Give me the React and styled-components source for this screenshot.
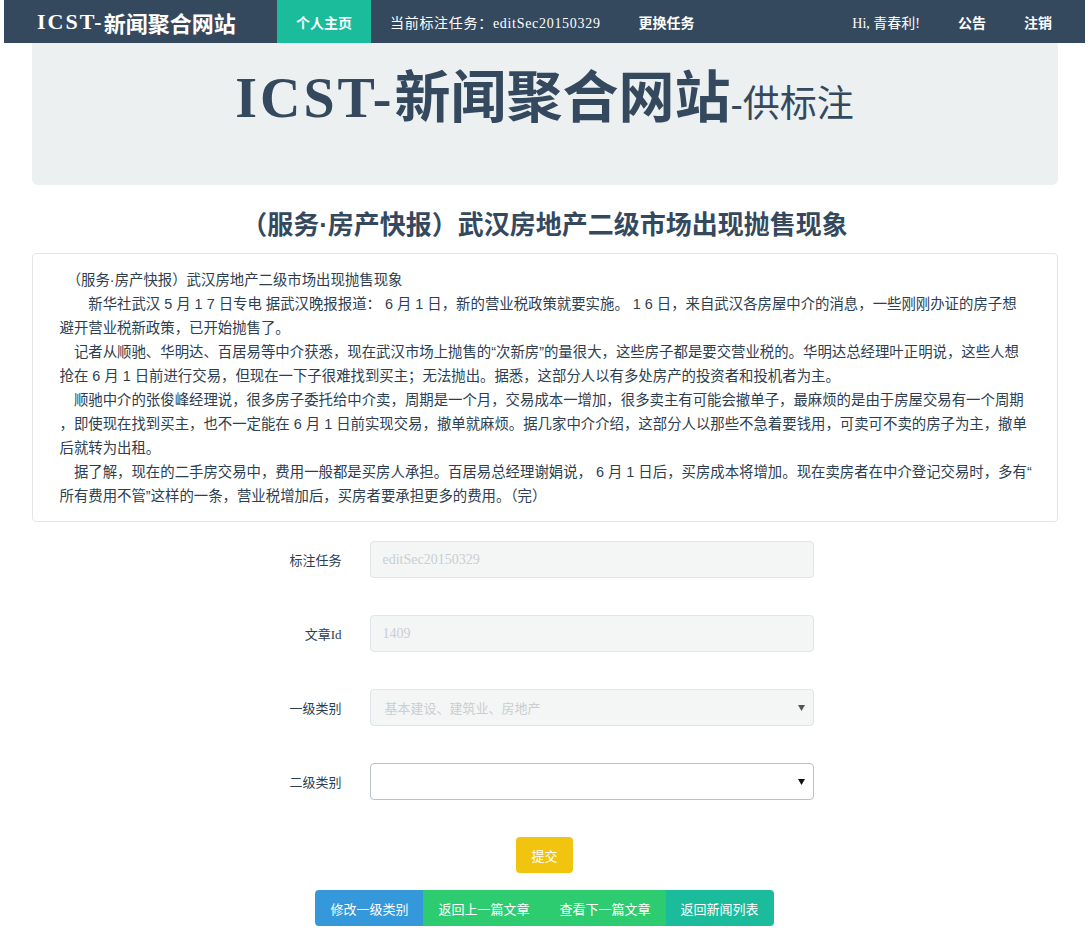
import React from 'react'
import styled, { createGlobalStyle } from 'styled-components'

const GlobalStyle = createGlobalStyle`
  body {
    margin: 0;
    background: #fff;
    font-family: "Liberation Serif", "Noto Sans CJK SC", serif;
    color: #2c3e50;
  }
`

const NavBar = styled.div`
  height: 43px;
  margin: 0 4px;
  background: #34495e;
  display: flex;
  align-items: stretch;
  color: #fff;
`

const Brand = styled.div`
  width: 273px;
  box-sizing: border-box;
  padding-left: 33px;
  display: flex;
  align-items: center;
  font-size: 22px;
  font-weight: bold;
  white-space: nowrap;
`

// latin part of a heading, spaced out to match the wider serif of the original
const Latin = styled.span`
  letter-spacing: ${p => p.spacing || '1px'};
`

const NavGroup = styled.div`
  display: flex;
  align-items: stretch;
  margin-left: ${p => (p.right ? 'auto' : '0')};
  padding-right: ${p => (p.right ? '14px' : '0')};
`

const NavItem = styled.div`
  display: flex;
  align-items: center;
  padding: 0 19px;
  font-size: 14px;
  font-weight: ${p => (p.bold ? 'bold' : 'normal')};
  letter-spacing: ${p => p.spacing || '0'};
  background: ${p => (p.active ? '#1abc9c' : 'transparent')};
  white-space: nowrap;
`

const Container = styled.div`
  width: 1026px;
  margin: 0 auto;
`

const Jumbotron = styled.div`
  height: 142px;
  box-sizing: border-box;
  padding-top: 24px;
  background: #ecf0f1;
  border-radius: 0 0 6px 6px;
  text-align: center;
`

const Title = styled.h1`
  margin: 0;
  font-size: 56px;
  line-height: 62px;
  font-weight: bold;
  color: #34495e;
  white-space: nowrap;
`

const TitleSmall = styled.span`
  font-size: 37px;
  font-weight: normal;
  font-family: "Liberation Sans", "Noto Sans CJK SC", sans-serif;
`

const Heading = styled.h2`
  margin: 26px 0 13px;
  text-align: center;
  font-family: "Liberation Sans", "Noto Sans CJK SC", sans-serif;
  font-size: 26px;
  line-height: 29px;
  font-weight: bold;
  color: #34495e;
`

const Article = styled.div`
  border: 1px solid #e3e6e8;
  border-radius: 4px;
  padding: 14px 10px 13px 27px;
  font-family: "Liberation Sans", "Noto Sans CJK SC", sans-serif;
  font-size: 14.4px;
  line-height: 24px;
  color: #2c3e50;
`

const Line = styled.div`
  white-space: pre;
`

const Form = styled.div`
  margin-top: 19px;
  display: flex;
  flex-direction: column;
  gap: 37px;
`

const FormRow = styled.div`
  display: grid;
  grid-template-columns: 310px 444px;
  column-gap: 28px;
  align-items: center;
`

const Label = styled.div`
  text-align: right;
  font-size: 13px;
  color: #2c3e50;
`

const Input = styled.input`
  height: 37px;
  box-sizing: border-box;
  padding: 0 12px;
  border: 1px solid #dfe5e8;
  border-radius: 4px;
  background: #f4f6f6;
  font-family: "Liberation Serif", "Noto Sans CJK SC", serif;
  font-size: 14px;
  color: #c9ced1;
  -webkit-text-fill-color: #c9ced1;
  opacity: 1;
`

const SelectBox = styled.div`
  height: 37px;
  box-sizing: border-box;
  padding: 0 8px 0 14px;
  display: flex;
  align-items: center;
  justify-content: space-between;
  border: 1px solid ${p => (p.disabled ? '#dfe5e8' : '#b9c1c7')};
  border-radius: 4px;
  background: ${p => (p.disabled ? '#f4f6f6' : '#fff')};
  font-family: "Liberation Sans", "Noto Sans CJK SC", sans-serif;
  font-size: 13px;
  color: #c9ced1;
`

const Caret = styled.svg`
  width: 7px;
  height: 6px;
  fill: ${p => (p.disabled ? '#555' : '#111')};
`

const SubmitWrap = styled.div`
  margin-top: 37px;
  display: flex;
  justify-content: center;
`

const Button = styled.button`
  height: 36px;
  padding: 0 15px;
  border: none;
  border-radius: ${p => p.radius || '4px'};
  background: ${p => p.bg};
  color: #fff;
  font-family: "Liberation Sans", "Noto Sans CJK SC", sans-serif;
  font-size: 13px;
  cursor: pointer;
`

const ButtonGroup = styled.div`
  margin-top: 17px;
  display: flex;
  justify-content: center;
`

const lines = [
  '\u3000（服务·房产快报）武汉房地产二级市场出现抛售现象',
  '\u3000\u3000新华社武汉 5 月 1 7 日专电 据武汉晚报报道： 6 月 1 日，新的营业税政策就要实施。 1 6 日，来自武汉各房屋中介的消息，一些刚刚办证的房子想',
  '避开营业税新政策，已开始抛售了。',
  '\u3000记者从顺驰、华明达、百居易等中介获悉，现在武汉市场上抛售的“次新房”的量很大，这些房子都是要交营业税的。华明达总经理叶正明说，这些人想',
  '抢在 6 月 1 日前进行交易，但现在一下子很难找到买主；无法抛出。据悉，这部分人以有多处房产的投资者和投机者为主。',
  '\u3000顺驰中介的张俊峰经理说，很多房子委托给中介卖，周期是一个月，交易成本一增加，很多卖主有可能会撤单子，最麻烦的是由于房屋交易有一个周期',
  '，即使现在找到买主，也不一定能在 6 月 1 日前实现交易，撤单就麻烦。据几家中介介绍，这部分人以那些不急着要钱用，可卖可不卖的房子为主，撤单',
  '后就转为出租。',
  '\u3000据了解，现在的二手房交易中，费用一般都是买房人承担。百居易总经理谢娟说， 6 月 1 日后，买房成本将增加。现在卖房者在中介登记交易时，多有“',
  '所有费用不管”这样的一条，营业税增加后，买房者要承担更多的费用。（完）'
]

const CaretIcon = ({ disabled }) => (
  <Caret disabled={disabled} viewBox="0 0 7 6">
    <polygon points="0,0 7,0 3.5,6" />
  </Caret>
)

export default function App() {
  return <>
    <GlobalStyle />
    <NavBar>
      <Brand><Latin spacing="2px">ICST-</Latin>新闻聚合网站</Brand>
      <NavGroup>
        <NavItem bold active>个人主页</NavItem>
        <NavItem spacing="0.7px">当前标注任务：editSec20150329</NavItem>
        <NavItem bold>更换任务</NavItem>
      </NavGroup>
      <NavGroup right>
        <NavItem>Hi, 青春利!</NavItem>
        <NavItem bold>公告</NavItem>
        <NavItem bold>注销</NavItem>
      </NavGroup>
    </NavBar>

    <Container>
      <Jumbotron>
        <Title><Latin spacing="3px">ICST-</Latin>新闻聚合网站<TitleSmall>-供标注</TitleSmall></Title>
      </Jumbotron>

      <Heading>（服务·房产快报）武汉房地产二级市场出现抛售现象</Heading>

      <Article>
        {lines.map((l, i) => <Line key={i}>{l}</Line>)}
      </Article>

      <Form>
        <FormRow>
          <Label>标注任务</Label>
          <Input disabled readOnly value="editSec20150329" />
        </FormRow>
        <FormRow>
          <Label>文章Id</Label>
          <Input disabled readOnly value="1409" />
        </FormRow>
        <FormRow>
          <Label>一级类别</Label>
          <SelectBox disabled>
            <span>基本建设、建筑业、房地产</span>
            <CaretIcon disabled />
          </SelectBox>
        </FormRow>
        <FormRow>
          <Label>二级类别</Label>
          <SelectBox>
            <span></span>
            <CaretIcon />
          </SelectBox>
        </FormRow>
      </Form>

      <SubmitWrap>
        <Button bg="#f1c40f">提交</Button>
      </SubmitWrap>

      <ButtonGroup>
        <Button bg="#3498db" radius="4px 0 0 4px">修改一级类别</Button>
        <Button bg="#2ecc71" radius="0">返回上一篇文章</Button>
        <Button bg="#2ecc71" radius="0">查看下一篇文章</Button>
        <Button bg="#1abc9c" radius="0 4px 4px 0">返回新闻列表</Button>
      </ButtonGroup>
    </Container>
  </>
}
